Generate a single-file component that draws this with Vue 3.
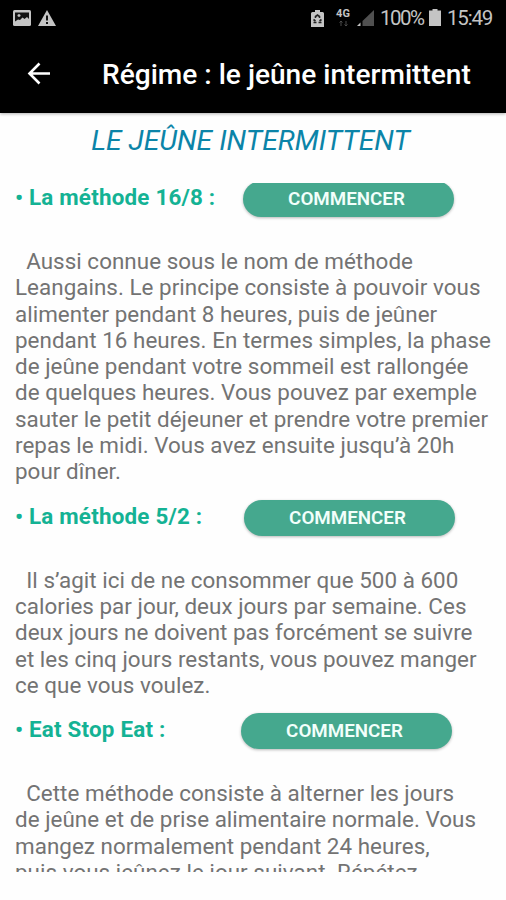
<template>
  <div class="screen">
    <div class="status-bar">
      <div class="status-left">
        <svg class="icon-image" viewBox="0 0 18 16">
          <rect x="0" y="0" width="18" height="16" rx="1.5" fill="#c4c4c4" />
          <path d="M2 2.500h14v6.500l-2-2-2.500 2-2-1.500L7 10l-2-.5-3 2z" fill="#111" />
          <path d="M4.500 5.500h3M6 4v3" stroke="#c4c4c4" stroke-width="1.300" />
        </svg>
        <svg class="icon-warning" viewBox="0 0 18 16">
          <path d="M9 0l9 16H0z" fill="#c4c4c4" />
          <path d="M8 5.5h2v5H8zM8 12h2v2H8z" fill="#111" />
        </svg>
      </div>
      <div class="status-right">
        <svg class="icon-saver" viewBox="0 0 13 17">
          <path d="M1.500 2H4V0h5v2h2.500Q13 2 13 3.500V17H0V3.500Q0 2 1.500 2z" fill="#c4c4c4" />
          <path d="M4.500 8V6.500l2-1.500 2 1.500V8M2.500 9.500L4.500 11M10.500 9.500L8.500 11M2.500 12.500h3M7.500 12.500h3" fill="none" stroke="#222" stroke-width="1.600" />
        </svg>
        <div class="network">
          <span class="network-type">4G</span>
          <svg class="icon-traffic" viewBox="0 0 9 5">
            <path d="M2 5V0M0.500 1.500L2 0l1.500 1.500M7 0v5M5.500 3.500L7 5l1.500-1.500" fill="none" stroke="#4a4a4a" />
          </svg>
        </div>
        <svg class="icon-signal" viewBox="0 0 17 16">
          <path d="M17 0v16H5.500v-5z" fill="#505050" />
          <path d="M3.500 12.500V16H0z" fill="#c4c4c4" />
        </svg>
        <span class="battery-level">100%</span>
        <svg class="icon-battery" viewBox="0 0 12 17">
          <path d="M3.500 0h5v1.500H12V17H0V1.500h3.500z" fill="#c4c4c4" />
        </svg>
        <span class="clock">15:49</span>
      </div>
    </div>

    <header class="app-bar">
      <button class="back-btn" aria-label="Retour">
        <svg viewBox="0 0 24 24">
          <path d="M12.500 1.500L2.500 11.500L12.500 21.500M2.500 11.500H23" fill="none" stroke="#fff" stroke-width="2.600" />
        </svg>
      </button>
      <h1 class="app-title">Régime : le jeûne intermittent</h1>
    </header>

    <h2 class="page-title">LE JEÛNE INTERMITTENT</h2>

    <main class="content">
      <section v-for="method in methods" :key="method.id" class="method" :class="method.id">
        <div class="method-head">
          <h3 class="method-name">• {{ method.name }} :</h3>
          <button class="start-btn">COMMENCER</button>
        </div>
        <p class="method-text">
          <span v-for="line in method.lines" :key="line" class="line">{{ line }}</span>
        </p>
      </section>
    </main>
  </div>
</template>

<script setup>
const methods = [
  {
    id: 'm168',
    name: 'La méthode 16/8',
    lines: [
      '  Aussi connue sous le nom de méthode',
      'Leangains. Le principe consiste à pouvoir vous',
      'alimenter pendant 8 heures, puis de jeûner',
      'pendant 16 heures. En termes simples, la phase',
      'de jeûne pendant votre sommeil est rallongée',
      'de quelques heures. Vous pouvez par exemple',
      'sauter le petit déjeuner et prendre votre premier',
      'repas le midi. Vous avez ensuite jusqu’à 20h',
      'pour dîner.'
    ]
  },
  {
    id: 'm52',
    name: 'La méthode 5/2',
    lines: [
      '  Il s’agit ici de ne consommer que 500 à 600',
      'calories par jour, deux jours par semaine. Ces',
      'deux jours ne doivent pas forcément se suivre',
      'et les cinq jours restants, vous pouvez manger',
      'ce que vous voulez.'
    ]
  },
  {
    id: 'eatstop',
    name: 'Eat Stop Eat',
    lines: [
      '  Cette méthode consiste à alterner les jours',
      'de jeûne et de prise alimentaire normale. Vous',
      'mangez normalement pendant 24 heures,',
      'puis vous jeûnez le jour suivant. Répétez'
    ]
  }
]
</script>

<style>
body { margin: 0; background: #fefefe; }
</style>

<style scoped>
.screen {
  width: 506px; height: 900px; overflow: hidden; background: #fefefe;
  font-family: Roboto, "Liberation Sans", sans-serif;
}
h1, h2, h3, p { margin: 0; }
button { border: none; padding: 0; font-family: inherit; cursor: pointer; }
svg { display: block; flex: none; }

.status-bar {
  display: flex; justify-content: space-between; box-sizing: border-box;
  height: 36px; padding: 0 13px; background: #000; color: #c4c4c4;
}
.status-left { display: flex; gap: 7px; padding-top: 10px; }
.icon-image, .icon-warning { width: 18px; height: 16px; }
.status-right { display: flex; align-items: center; }
.icon-saver { width: 13px; height: 17px; margin-right: 11px; }
.network { display: flex; flex-direction: column; align-items: center; gap: 2px; width: 16px; margin: -2px 6px 0 0; }
.network-type { font-size: 11px; line-height: 10px; font-weight: 700; }
.icon-traffic { width: 9px; height: 5px; }
.icon-signal { width: 17px; height: 16px; margin-right: 6px; }
.battery-level { width: 44px; font-size: 20.5px; letter-spacing: -1.5px; white-space: nowrap; }
.icon-battery { width: 12px; height: 17px; margin: -2px 6px 0 5px; }
.clock { width: 46px; font-size: 20.5px; letter-spacing: -1.2px; white-space: nowrap; }

.app-bar {
  display: flex; align-items: center; box-sizing: border-box;
  height: 77px; padding-left: 28px; background: #000;
  box-shadow: 0 1px 3px rgba(0, 0, 0, 0.3);
}
.back-btn { width: 24px; height: 24px; margin: -2px 50px 0 -1px; background: none; }
.back-btn svg { width: 24px; height: 24px; }
.app-title { padding-left: 1px; color: #fff; font-size: 28.1px; font-weight: 500; white-space: nowrap; }

.page-title {
  height: 70px; line-height: 55px; padding-right: 5px; text-align: center;
  color: #0b84a8; font-size: 28.3px; font-weight: 400; font-style: italic;
}

/* scrolled viewport, both ends cut their content */
.content { height: 689px; overflow: hidden; }
.method-head {
  display: flex; align-items: flex-start; box-sizing: border-box;
  height: 82px; padding: 15px 0 0 15px;
}
.m168 .method-head { height: 65px; padding-top: 0; }
.m168 .start-btn { margin-top: -2px; }
.method-name {
  width: 228px; line-height: 35px; margin-top: -1px;
  color: #14b294; font-size: 22.4px; font-weight: 700; letter-spacing: 0.2px; white-space: nowrap;
}
.m168 .method-name { margin-top: -3px; }
.m52 .method-name { width: 229px; }
.eatstop .method-name { width: 226px; }
.start-btn {
  box-sizing: border-box; width: 211px; height: 36px; padding-right: 4px; border-radius: 18px;
  background: #45a88e; color: #f2fffb;
  font-size: 18.8px; font-weight: 600; box-shadow: 0 1px 3px rgba(0, 0, 0, 0.28);
}
.method-text {
  padding-left: 15px; color: #737373;
  font-size: 22.4px; line-height: 26.3px; letter-spacing: 0.04px;
}
.line { display: block; white-space: pre; }
</style>
